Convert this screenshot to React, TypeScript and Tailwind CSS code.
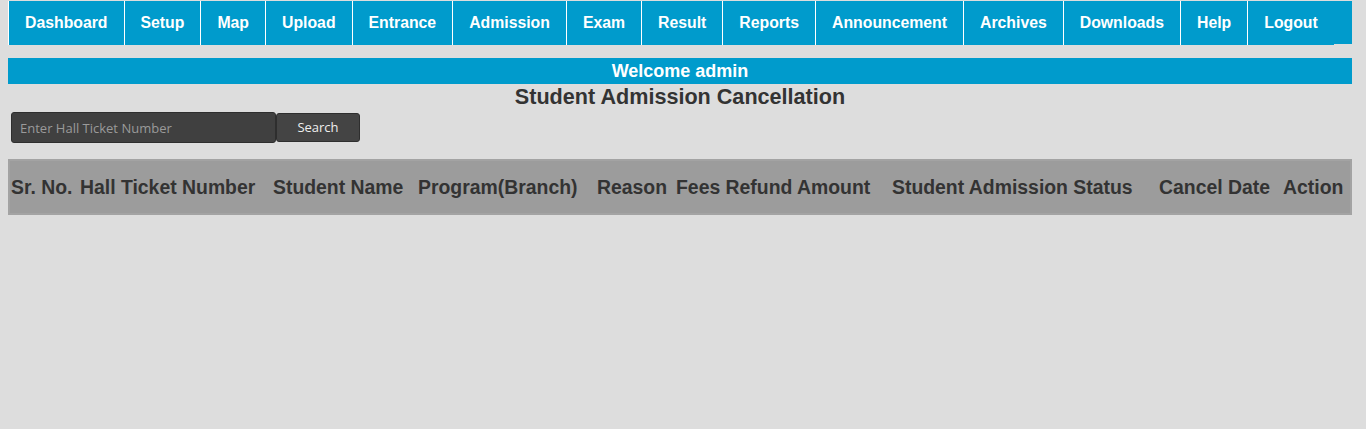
const menu: string[] = [
  "Dashboard",
  "Setup",
  "Map",
  "Upload",
  "Entrance",
  "Admission",
  "Exam",
  "Result",
  "Reports",
  "Announcement",
  "Archives",
  "Downloads",
  "Help",
  "Logout",
];

const columns: { label: string; width: string }[] = [
  { label: "Sr. No.", width: "w-[69px]" },
  { label: "Hall Ticket Number", width: "w-[193px]" },
  { label: "Student Name", width: "w-[145px]" },
  { label: "Program(Branch)", width: "w-[179px]" },
  { label: "Reason", width: "w-[79px]" },
  { label: "Fees Refund Amount", width: "w-[216px]" },
  { label: "Student Admission Status", width: "w-[267px]" },
  { label: "Cancel Date", width: "w-[124px]" },
  { label: "Action", width: "w-[68px]" },
];

const App = () => {
  return (
    <div className="w-full min-h-[429px] bg-[#dddddd] font-['Liberation_Sans',Arial,sans-serif] pt-px">
      <div className="ml-2 mr-[14px]">
        <nav className="h-[43px] bg-[#009bcc] flex flex-row items-start">
          {menu.map((item, index) => (
            <a
              key={`key-menu-${index}`}
              className="h-[44px] bg-[#009bcc] border-l border-white px-4 flex items-center text-white font-bold text-[15.8px] cursor-pointer whitespace-nowrap"
            >
              {item}
            </a>
          ))}
        </nav>

        <div className="mt-[14px] h-[26px] bg-[#009bcc] flex items-center justify-center">
          <p className="text-white font-bold text-[18px] leading-none">Welcome admin</p>
        </div>

        <h2 className="text-center text-[#333333] font-bold text-[21.6px] leading-[26px]">
          Student Admission Cancellation
        </h2>

        <div className="flex flex-row items-center ml-[3px] mt-[2px] font-['Open_Sans',sans-serif] text-[13px]">
          <input
            type="text"
            placeholder="Enter Hall Ticket Number"
            className="w-[265px] h-[31px] bg-[#404040] border border-[#2e2e2e] rounded-[3px] px-2 text-[#dddddd] placeholder:text-[#9a9a9a] outline-none"
          />
          <button className="w-[84px] h-[29px] pt-px bg-[#444444] border border-[#2e2e2e] rounded-[3px] text-[#eeeeee]">
            Search
          </button>
        </div>

        <table className="mt-[16px] w-full table-fixed border-2 border-[#a3a3a3] bg-[#9c9c9c] border-separate border-spacing-0">
          <thead>
            <tr className="h-[52px]">
              {columns.map((col, index) => (
                <th
                  key={`key-col-${index}`}
                  className={`${col.width} text-left font-bold text-[19.4px] text-[#333333] pl-[1px] pt-[2px] whitespace-nowrap`}
                >
                  {col.label}
                </th>
              ))}
            </tr>
          </thead>
        </table>
      </div>
    </div>
  );
};

export default App;
